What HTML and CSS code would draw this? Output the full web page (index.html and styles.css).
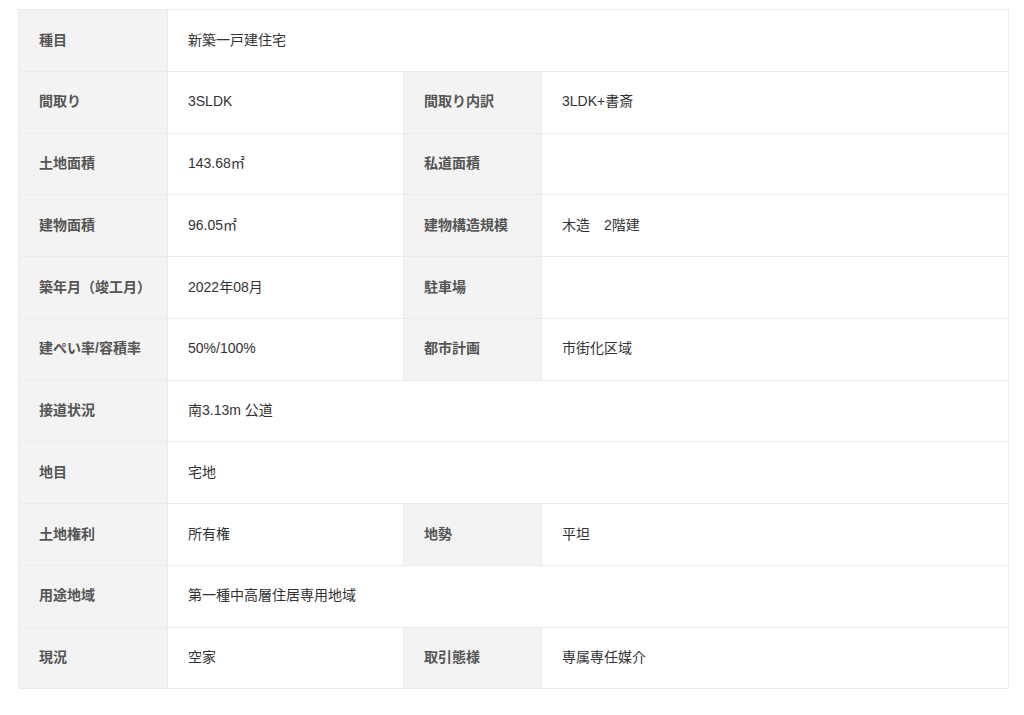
FILE: index.html
```html
<!DOCTYPE html>
<html lang="ja">
<head>
<meta charset="utf-8">
<link rel="stylesheet" href="styles.css">
</head>
<body>
<div class="wrap">
<table class="spec">
<colgroup><col class="c1"><col class="c2"><col class="c3"><col class="c4"></colgroup>
<tbody>
<tr><th>種目</th><td colspan="3">新築一戸建住宅</td></tr>
<tr><th>間取り</th><td>3SLDK</td><th>間取り内訳</th><td>3LDK+書斎</td></tr>
<tr><th>土地面積</th><td>143.68㎡</td><th>私道面積</th><td></td></tr>
<tr><th>建物面積</th><td>96.05㎡</td><th>建物構造規模</th><td>木造　2階建</td></tr>
<tr><th>築年月（竣工月）</th><td>2022年08月</td><th>駐車場</th><td></td></tr>
<tr><th>建ぺい率/容積率</th><td>50%/100%</td><th>都市計画</th><td>市街化区域</td></tr>
<tr><th>接道状況</th><td colspan="3">南3.13m 公道</td></tr>
<tr><th>地目</th><td colspan="3">宅地</td></tr>
<tr><th>土地権利</th><td>所有権</td><th>地勢</th><td>平坦</td></tr>
<tr><th>用途地域</th><td colspan="3">第一種中高層住居専用地域</td></tr>
<tr><th>現況</th><td>空家</td><th>取引態様</th><td>専属専任媒介</td></tr>
</tbody>
</table>
</div>
</body>
</html>
```
FILE: styles.css
```css
html, body { margin: 0; padding: 0; background: #fff; }
.wrap { padding: 9px 16px 0 18px; }
.spec {
  width: 990px;
  border-collapse: collapse;
  table-layout: fixed;
  font-family: "Liberation Sans", "Noto Sans CJK JP", sans-serif;
  font-size: 14px;
}
.c1 { width: 149px; }
.c2 { width: 236px; }
.c3 { width: 138px; }
.c4 { width: 467px; }
.spec th, .spec td {
  border: 1px solid #ebebeb;
  height: 61.75px;
  padding: 0 20px;
  box-sizing: border-box;
  text-align: left;
  vertical-align: middle;
  line-height: 1.4;
}
.spec th {
  background: #f3f3f3;
  color: #555;
  font-weight: bold;
}
.spec td { color: #333; font-weight: normal; }
```
